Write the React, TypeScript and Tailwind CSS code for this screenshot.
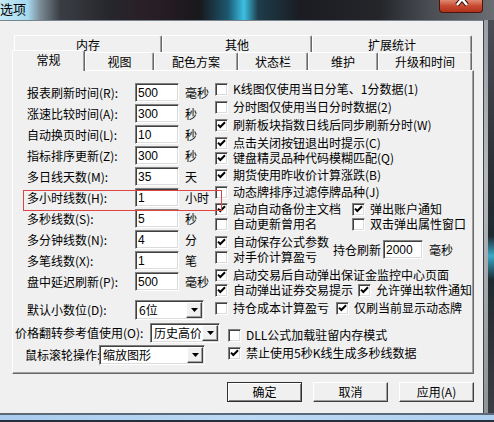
function Box({ on }: { on?: boolean }) {
  return (
    <span className="flex h-[13px] w-[13px] shrink-0 items-center justify-center border border-t-[#808080] border-l-[#808080] border-r-white border-b-white bg-white shadow-[inset_1px_1px_0_#404040,inset_-1px_-1px_0_#dcdcdc]">
      {on && (
        <svg width="9" height="9" viewBox="0 0 9 9">
          <path d="M1 3.6l2.3 2.4L8 1.2" fill="none" stroke="#000" strokeWidth="2" />
        </svg>
      )}
    </span>
  );
}

function Chk({ on, label, className = "" }: { on?: boolean; label: string; className?: string }) {
  return (
    <div className={"flex h-[14px] shrink-0 items-center gap-[5px] whitespace-nowrap " + className}>
      <Box on={on} />
      <span className="text-[12px] leading-[14px]">{label}</span>
    </div>
  );
}

function Field({ v, className = "" }: { v: string; className?: string }) {
  return (
    <div className={"flex h-[19px] items-center border border-t-[#808080] border-l-[#808080] border-r-white border-b-white bg-white pl-[2px] shadow-[inset_1px_1px_0_#404040,inset_-1px_-1px_0_#dcdcdc] [font-family:'Liberation_Sans',sans-serif] text-[12px] " + className}>
      {v}
    </div>
  );
}

function Combo({ v, className = "" }: { v: string; className?: string }) {
  return (
    <div className={"relative flex h-[20px] shrink-0 items-stretch border border-t-[#808080] border-l-[#808080] border-r-white border-b-white bg-white shadow-[inset_1px_1px_0_#404040,inset_-1px_-1px_0_#dcdcdc] " + className}>
      <span className="flex min-w-0 flex-1 items-center overflow-hidden whitespace-nowrap pl-[3px] text-[12px] leading-[14px]">{v}</span>
      <span className="m-[1px] flex w-[16px] shrink-0 items-center justify-center border border-t-white border-l-white border-r-[#404040] border-b-[#404040] bg-[#f0f0f0] shadow-[inset_-1px_-1px_0_#a0a0a0]">
        <svg width="7" height="4" viewBox="0 0 7 4">
          <path d="M0 0h7L3.5 4z" fill="#000" />
        </svg>
      </span>
    </div>
  );
}

function Tab({ label, className = "" }: { label: string; className?: string }) {
  return (
    <div className={"flex shrink-0 items-center justify-center rounded-t-[2px] border-l border-t border-r border-l-white border-t-white border-r-[#696969] bg-[#f0f0f0] text-[12px] leading-[14px] shadow-[inset_-1px_0_0_#a0a0a0] " + className}>
      {label}
    </div>
  );
}

function Btn({ label, def }: { label: string; def?: boolean }) {
  return (
    <div className={def
      ? "flex h-[20px] w-[75px] items-center justify-center border border-[#303030] bg-[#f0f0f0] text-[12px] shadow-[inset_1px_1px_0_#ffffff,inset_-1px_-1px_0_#808080]"
      : "flex h-[20px] w-[75px] items-center justify-center border border-t-white border-l-white border-r-[#404040] border-b-[#404040] bg-[#f0f0f0] text-[12px] shadow-[inset_-1px_-1px_0_#a0a0a0]"}>
      {label}
    </div>
  );
}

const rows = [
  { l: "报表刷新时间(R):", v: "500", u: "毫秒" },
  { l: "涨速比较时间(A):", v: "300", u: "秒" },
  { l: "自动换页时间(L):", v: "10", u: "秒" },
  { l: "指标排序更新(Z):", v: "300", u: "秒" },
  { l: "多日线天数(M):", v: "35", u: "天" },
  { l: "多小时线数(H):", v: "1", u: "小时", mark: true },
  { l: "多秒线数(S):", v: "5", u: "秒" },
  { l: "多分钟线数(N):", v: "4", u: "分" },
  { l: "多笔线数(X):", v: "1", u: "笔" },
  { l: "盘中延迟刷新(P):", v: "500", u: "毫秒" },
];

export default function App() {
  return (
    <div className="flex h-[422px] w-[494px] flex-col overflow-hidden bg-[#f0f0f0] text-black [font-family:'Noto_Sans_CJK_SC','Liberation_Sans',sans-serif]">
      {/* glass title bar */}
      <div className="flex h-[20px] shrink-0 items-start bg-[linear-gradient(90deg,#c4eaf8_0px,#a4d8ee_28px,#7c8c96_40px,#3a3e44_60px,#26262c_110px,#2a1e26_150px,#18181c_200px,#1c5870_228px,#3cc0e4_244px,#1e3c4a_258px,#1a1c22_300px,#24262a_380px,#4a4e54_430px,#6a6e72_494px)]">
        <span className="pt-[1px] text-[13px] leading-[15px]">选项</span>
        <div className="ml-auto mr-[11px] h-[13px] w-[44px] overflow-hidden rounded-b-[4px] border border-t-0 border-[#4a160c] bg-[linear-gradient(180deg,#e08a74_0%,#c84a30_50%,#b0321c_100%)]">
          <svg width="44" height="13" viewBox="0 0 44 13">
            <path d="M22 -1L17 5M22 -1L27 5" stroke="#3a1008" strokeWidth="4.5" />
            <path d="M22 -1L17 5M22 -1L27 5" stroke="#fff" strokeWidth="2.5" />
          </svg>
        </div>
      </div>

      <div className="flex h-[393px] shrink-0">
        {/* client area */}
        <div className="flex w-[483px] flex-col border-t border-t-[#7a848e] pl-[12px] pt-[14px]">
          <div className="ml-[2px] flex h-[17px]">
            <Tab label="内存" className="h-[18px] w-[148px]" />
            <Tab label="其他" className="h-[18px] w-[150px]" />
            <Tab label="扩展统计" className="h-[18px] w-[160px]" />
          </div>
          <div className="flex h-[18px] items-end">
            <Tab label="常规" className="relative z-10 -mb-[1px] h-[21px] w-[73px] pb-[3px]" />
            <Tab label="视图" className="h-[18px] w-[69px]" />
            <Tab label="配色方案" className="h-[18px] w-[84px]" />
            <Tab label="状态栏" className="h-[18px] w-[70px]" />
            <Tab label="维护" className="h-[18px] w-[70px]" />
            <Tab label="升级和时间" className="h-[18px] w-[94px]" />
          </div>

          {/* tab page */}
          <div className="flex h-[304px] w-[462px] flex-col border border-t-white border-l-white border-r-[#696969] border-b-[#696969] pt-[11px] shadow-[inset_-1px_-1px_0_#a0a0a0]">
            <div className="flex">
              <div className="flex w-[202px] shrink-0 flex-col">
                {rows.map((r) => (
                  <div key={r.l} className="relative flex h-[21px] items-center pl-[14px]">
                    <span className="w-[108px] whitespace-nowrap text-[12px] leading-[14px]">{r.l}</span>
                    <Field v={r.v} className="w-[44px]" />
                    <span className="ml-[6px] text-[12px] leading-[14px]">{r.u}</span>
                    {r.mark && (
                      <span className="pointer-events-none absolute left-[10px] top-[3px] z-10 h-[21px] w-[199px] border border-[#e04444]" />
                    )}
                  </div>
                ))}
                <div className="mt-[8px] flex h-[20px] items-center pl-[14px]">
                  <span className="w-[108px] whitespace-nowrap text-[12px] leading-[14px]">默认小数位(D):</span>
                  <Combo v="6位" className="w-[69px]" />
                </div>
              </div>

              <div className="flex flex-col">
                <Chk label="K线图仅使用当日分笔、1分数据(1)" />
                <Chk className="mt-[4px]" label="分时图仅使用当日分时数据(2)" />
                <Chk className="mt-[4px]" on label="刷新板块指数日线后同步刷新分时(W)" />
                <Chk className="mt-[4px]" on label="点击关闭按钮退出时提示(C)" />
                <Chk className="mt-[1px]" on label="键盘精灵品种代码模糊匹配(Q)" />
                <Chk className="mt-[3px]" on label="期货使用昨收价计算涨跌(B)" />
                <Chk className="mt-[3px]" label="动态牌排序过滤停牌品种(J)" />
                <div className="mt-[3px] flex">
                  <Chk on label="启动自动备份主文档" className="w-[137px]" />
                  <Chk on label="弹出账户通知" />
                </div>
                <div className="mt-[1px] flex">
                  <Chk label="自动更新曾用名" className="w-[137px]" />
                  <Chk label="双击弹出属性窗口" />
                </div>
                <div className="mt-[4px] flex items-center">
                  <div className="flex w-[118px] flex-col">
                    <Chk on label="自动保存公式参数" />
                    <Chk className="mt-[1px]" label="对手价计算盈亏" />
                  </div>
                  <span className="w-[50px] text-[12px] leading-[14px]">持仓刷新</span>
                  <Field v="2000" className="w-[40px]" />
                  <span className="ml-[6px] text-[12px] leading-[14px]">毫秒</span>
                </div>
                <Chk className="mt-[4px]" on label="启动交易后自动弹出保证金监控中心页面" />
                <div className="mt-[1px] flex">
                  <Chk on label="自动弹出证券交易提示" className="w-[143px]" />
                  <Chk on label="允许弹出软件通知" />
                </div>
                <div className="mt-[4px] flex">
                  <Chk label="持仓成本计算盈亏" className="w-[121px]" />
                  <Chk on label="仅刷当前显示动态牌" />
                </div>
              </div>
            </div>

            <div className="mt-[3px] flex">
              <div className="flex w-[215px] shrink-0 flex-col">
                <div className="flex h-[20px] items-center pl-[2px]">
                  <span className="w-[135px] shrink-0 whitespace-nowrap text-[12px] leading-[14px]">价格翻转参考值使用(O):</span>
                  <Combo v="历史高价" className="w-[70px] border-[#505050] shadow-[inset_1px_1px_0_#404040,inset_-1px_-1px_0_#808080]" />
                </div>
                <div className="mt-[2px] flex h-[20px] items-center pl-[12px]">
                  <span className="w-[74px] shrink-0 whitespace-nowrap text-[12px] leading-[14px]">鼠标滚轮操作:</span>
                  <Combo v="缩放图形" className="w-[106px]" />
                </div>
              </div>
              <div className="flex flex-col">
                <Chk className="mt-[5px]" label="DLL公式加载驻留内存模式" />
                <Chk className="mt-[4px]" on label="禁止使用5秒K线生成多秒线数据" />
              </div>
            </div>
          </div>

          <div className="mt-[8px] flex w-[462px] justify-end gap-[11px]">
            <Btn def label="确定" />
            <Btn label="取消" />
            <Btn label="应用(A)" />
          </div>
        </div>

        {/* right glass frame */}
        <div className="flex w-[11px] border-l border-l-[#3c4248]">
          <div className="w-[4px] bg-[linear-gradient(180deg,#9aa0a6_0%,#b4b8bc_40%,#8e9498_100%)]" />
          <div className="flex-1 bg-[linear-gradient(180deg,#4a4e54_0%,#2a2e34_40%,#1e2a30_55%,#3aa8c8_60%,#1e2a30_66%,#2a2e34_75%,#3a3e44_100%)]" />
        </div>
      </div>

      {/* bottom frame */}
      <div className="flex h-[9px] shrink-0 flex-col">
        <div className="h-[2px] bg-[#5a6878]" />
        <div className="h-[5px] bg-[linear-gradient(90deg,#a8cbee_0%,#bcd9f4_50%,#b0d0f0_100%)]" />
        <div className="h-[2px] bg-[#26303c]" />
      </div>
    </div>
  );
}
